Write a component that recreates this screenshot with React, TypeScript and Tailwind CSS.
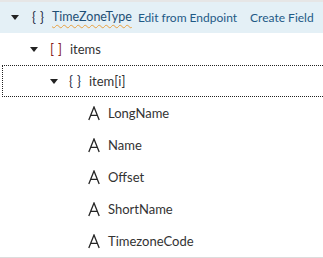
import React from 'react';

type Field = { name: string };

const fields: Field[] = [
  { name: 'LongName' },
  { name: 'Name' },
  { name: 'Offset' },
  { name: 'ShortName' },
  { name: 'TimezoneCode' },
];

const Caret: React.FC = () => (
  <svg width="8" height="5" viewBox="0 0 8 5" className="shrink-0">
    <path d="M0 0 L8 0 L4 5 Z" fill="#222" />
  </svg>
);

// object / array glyph pair, e.g. { } or [ ]
const Pair: React.FC<{ open: string; close: string; color: string }> = ({ open, close, color }) => (
  <span className="flex gap-[4px] w-[20px] shrink-0" style={{ color }}>
    <span>{open}</span>
    <span>{close}</span>
  </span>
);

// string type glyph, thin "A"
const StringIcon: React.FC = () => (
  <svg width="12" height="15" viewBox="0 0 12 15" className="shrink-0">
    <path d="M0.8 14 L6 1 L11.2 14 M2.8 9.3 L9.2 9.3" fill="none" stroke="#262626" strokeWidth="1.3" />
  </svg>
);

export default function App() {
  return (
    <div className="w-[323px] h-[258px] bg-white overflow-hidden text-[13px] text-[#333] font-['Lato',sans-serif] leading-none">
      <div className="h-[2px] bg-[#e6e6e6]" />

      {/* root object */}
      <div className="h-[31px] bg-[#e4f0f6] flex items-center pl-[11px] whitespace-nowrap">
        <Caret />
        <span className="ml-[13px]">
          <Pair open="{" close="}" color="#1f2a44" />
        </span>
        <span className="text-[12.5px] text-[#1e4f75] underline decoration-wavy decoration-[#e8a040] underline-offset-[3px] decoration-1">
          TimeZoneType
        </span>
        <span className="ml-[6px] text-[12px] text-[#1e5a86]">Edit from Endpoint</span>
        <span className="ml-[13px] text-[12px] text-[#1e5a86]">Create Field</span>
      </div>

      {/* array */}
      <div className="h-[32px] flex items-center pl-[30px] whitespace-nowrap">
        <Caret />
        <span className="ml-[12px]">
          <Pair open="[" close="]" color="#8a1c1c" />
        </span>
        <span>items</span>
      </div>

      {/* array item */}
      <div className="h-[32px] flex items-center pl-[47px] ml-[2px] border border-dotted border-r-0 border-[#222] whitespace-nowrap">
        <Caret />
        <span className="ml-[11px]">
          <Pair open="{" close="}" color="#1f2a44" />
        </span>
        <span>item[i]</span>
      </div>

      {fields.map((f) => (
        <div key={f.name} className="h-[32px] flex items-center pl-[88px] whitespace-nowrap">
          <StringIcon />
          <span className="ml-[8px]">{f.name}</span>
        </div>
      ))}

      <div className="h-[1px] bg-[#dcdcdc]" />
    </div>
  );
}
